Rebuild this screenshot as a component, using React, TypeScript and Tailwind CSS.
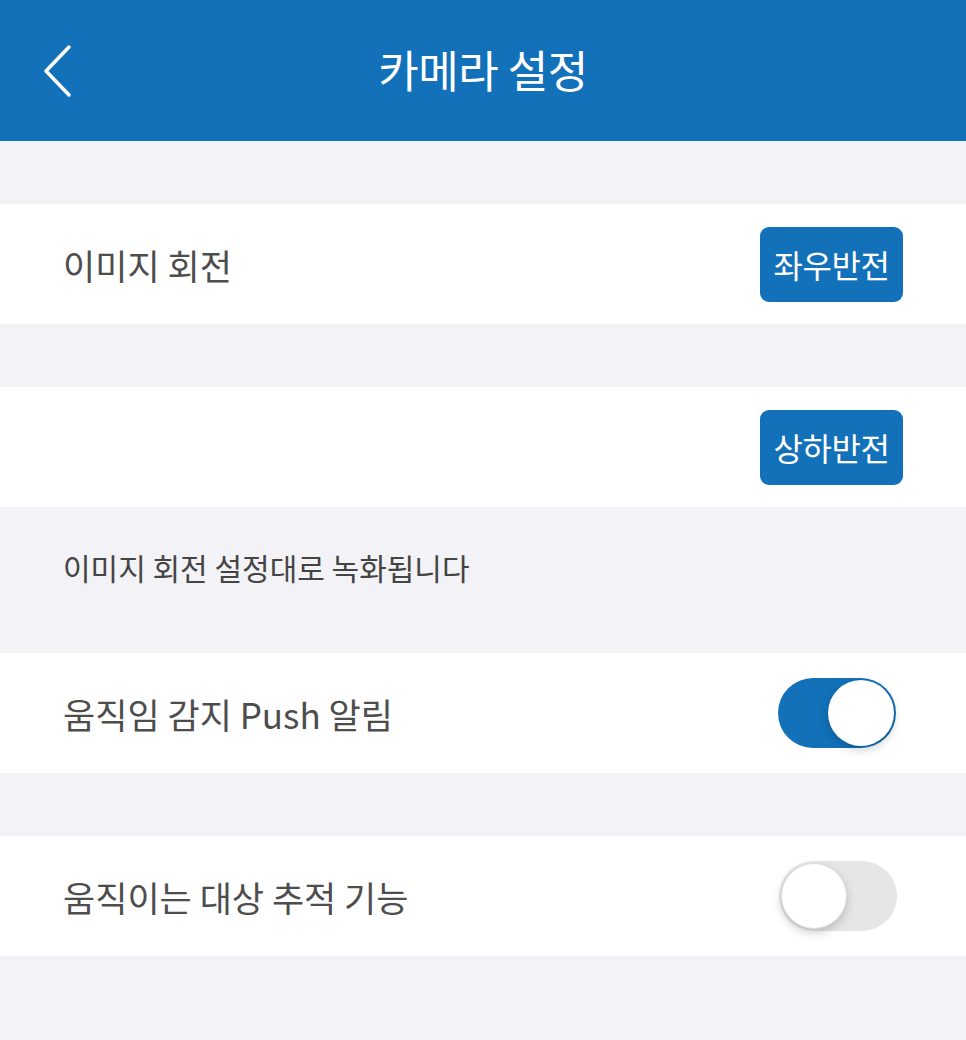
import { useState } from 'react'

const font = { fontFamily: '"Noto Sans CJK KR", "Noto Sans", sans-serif' }

function Toggle({ on, onClick }: { on: boolean; onClick: () => void }) {
  return (
    <button
      onClick={onClick}
      className={`relative w-[118px] h-[70px] rounded-full transition-colors ${on ? 'bg-[#1271b9]' : 'bg-[#e6e6e6]'}`}
    >
      <span
        className={`absolute top-[2px] w-[66px] h-[66px] rounded-full bg-white shadow-[0_4px_10px_rgba(0,0,0,0.18)] ${on ? 'left-[50px]' : 'left-[2px] border border-[#dcdcdc]'}`}
      />
    </button>
  )
}

function Row({ children, pr = 'pr-[63px]' }: { children: React.ReactNode; pr?: string }) {
  return <div className={`flex items-center justify-between h-[120px] bg-white pl-[63px] ${pr}`}>{children}</div>
}

function FlipButton({ label }: { label: string }) {
  return (
    <button className="w-[143px] h-[75px] rounded-[9px] bg-[#1271b9] text-white text-[32px] leading-none tracking-[-0.5px]">
      {label}
    </button>
  )
}

export default function App() {
  const [push, setPush] = useState(true)
  const [track, setTrack] = useState(false)

  return (
    <div style={font} className="w-[966px] h-[1040px] bg-[#f3f2f7] overflow-hidden">
      {/* Header */}
      <div className="relative flex items-center justify-center h-[141px] pb-[4px] bg-[#1271b9]">
        <svg className="absolute left-[38px] top-[44px]" width="36" height="54" viewBox="0 0 36 54">
          <path d="M31 3 L8 27 L31 51" fill="none" stroke="white" strokeWidth="3.5" strokeLinecap="round" strokeLinejoin="round" />
        </svg>
        <span className="text-white text-[44px] tracking-[-0.5px] leading-none">카메라 설정</span>
      </div>

      <div className="h-[63px]" />
      <Row>
        <span className="text-[35px] text-[#4d4d4d] leading-none">이미지 회전</span>
        <FlipButton label="좌우반전" />
      </Row>
      <div className="h-[63px]" />
      <Row>
        <span />
        <FlipButton label="상하반전" />
      </Row>
      <div className="h-[146px] flex items-start pt-[45px] pl-[63px]">
        <span className="text-[30px] text-[#444] leading-none">이미지 회전 설정대로 녹화됩니다</span>
      </div>
      <Row pr="pr-[70px]">
        <span className="text-[35px] text-[#4d4d4d] leading-none">움직임 감지 Push 알림</span>
        <Toggle on={push} onClick={() => setPush(!push)} />
      </Row>
      <div className="h-[63px]" />
      <Row pr="pr-[69px]">
        <span className="text-[35px] text-[#4d4d4d] leading-none">움직이는 대상 추적 기능</span>
        <Toggle on={track} onClick={() => setTrack(!track)} />
      </Row>
    </div>
  )
}
